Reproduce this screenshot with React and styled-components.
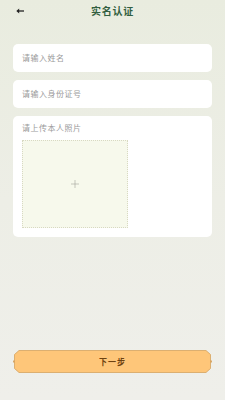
import React from "react";
import styled, { createGlobalStyle } from "styled-components";

const GlobalStyle = createGlobalStyle`
  html, body {
    margin: 0;
    padding: 0;
  }
  body {
    font-family: "Noto Sans CJK SC", "Noto Sans", sans-serif;
  }
  * {
    box-sizing: border-box;
  }
`;

const Page = styled.div`
  width: 225px;
  height: 400px;
  display: flex;
  flex-direction: column;
  background: linear-gradient(180deg, #e9ecdf 0%, #edeee6 50%, #efefea 100%);
  padding: 0 13px 27px;
`;

const Header = styled.div`
  height: 22px;
  display: flex;
  align-items: center;
  justify-content: center;
  position: relative;
  margin-bottom: 22px;
`;

const Back = styled.div`
  position: absolute;
  left: 3px;
  top: 7px;
  width: 8px;
  height: 8px;
  display: flex;
  align-items: center;
`;

const Title = styled.h1`
  margin: 0;
  font-size: 10px;
  font-weight: 700;
  letter-spacing: 0.7px;
  color: #325f40;
  line-height: 1;
`;

const Card = styled.div`
  background: #fff;
  border-radius: 5px;
  margin-bottom: 8px;
  padding: ${(p) => (p.$tall ? "8px 9px 9px" : "0 9px")};
  height: ${(p) => (p.$tall ? "auto" : "28px")};
  display: flex;
  flex-direction: column;
  justify-content: ${(p) => (p.$tall ? "flex-start" : "center")};
`;

const Placeholder = styled.div`
  font-size: 8px;
  line-height: 8px;
  letter-spacing: 0.5px;
  color: #9a9a9a;
`;

const Upload = styled.div`
  margin-top: 8px;
  width: 106px;
  height: 88px;
  background: #f7f9ec;
  border: 1px dotted #d8d9c2;
  display: flex;
  align-items: center;
  justify-content: center;
`;

const Spacer = styled.div`
  flex: 1;
`;

const NextButton = styled.button`
  position: relative;
  width: 199px;
  height: 23px;
  padding: 0;
  border: none;
  background: transparent;
  display: flex;
  align-items: center;
  justify-content: center;
  font-family: inherit;
  cursor: pointer;

  svg {
    position: absolute;
    inset: 0;
  }
`;

const ButtonText = styled.span`
  position: relative;
  font-size: 8px;
  font-weight: 700;
  letter-spacing: 1px;
  color: #6e4210;
`;

export default function App() {
  return (
    <>
      <GlobalStyle />
      <Page>
        <Header>
          <Back>
            <svg width="8" height="6" viewBox="0 0 8 6">
              <path d="M8 3H2" stroke="#222" strokeWidth="1.3" />
              <path d="M3.2 0.4L0.3 3L3.2 5.6Z" fill="#222" />
            </svg>
          </Back>
          <Title>实名认证</Title>
        </Header>
        <Card>
          <Placeholder>请输入姓名</Placeholder>
        </Card>
        <Card>
          <Placeholder>请输入身份证号</Placeholder>
        </Card>
        <Card $tall>
          <Placeholder>请上传本人照片</Placeholder>
          <Upload>
            <svg width="8" height="8" viewBox="0 0 8 8">
              <path d="M4 0V8M0 4H8" stroke="#a3a39a" strokeWidth="0.6" />
            </svg>
          </Upload>
        </Card>
        <Spacer />
        <NextButton>
          <svg width="199" height="23" viewBox="0 0 199 23">
            <circle cx="1.2" cy="11.5" r="1.2" fill="#d6a35f" />
            <circle cx="197.8" cy="11.5" r="1.2" fill="#d6a35f" />
            <path
              d="M6 0.5H193L197.5 4.5V18.5L193 22.5H6L1.5 18.5V4.5Z"
              fill="#fec679"
              stroke="#d6a35f"
              strokeWidth="0.8"
            />
          </svg>
          <ButtonText>下一步</ButtonText>
        </NextButton>
      </Page>
    </>
  );
}
